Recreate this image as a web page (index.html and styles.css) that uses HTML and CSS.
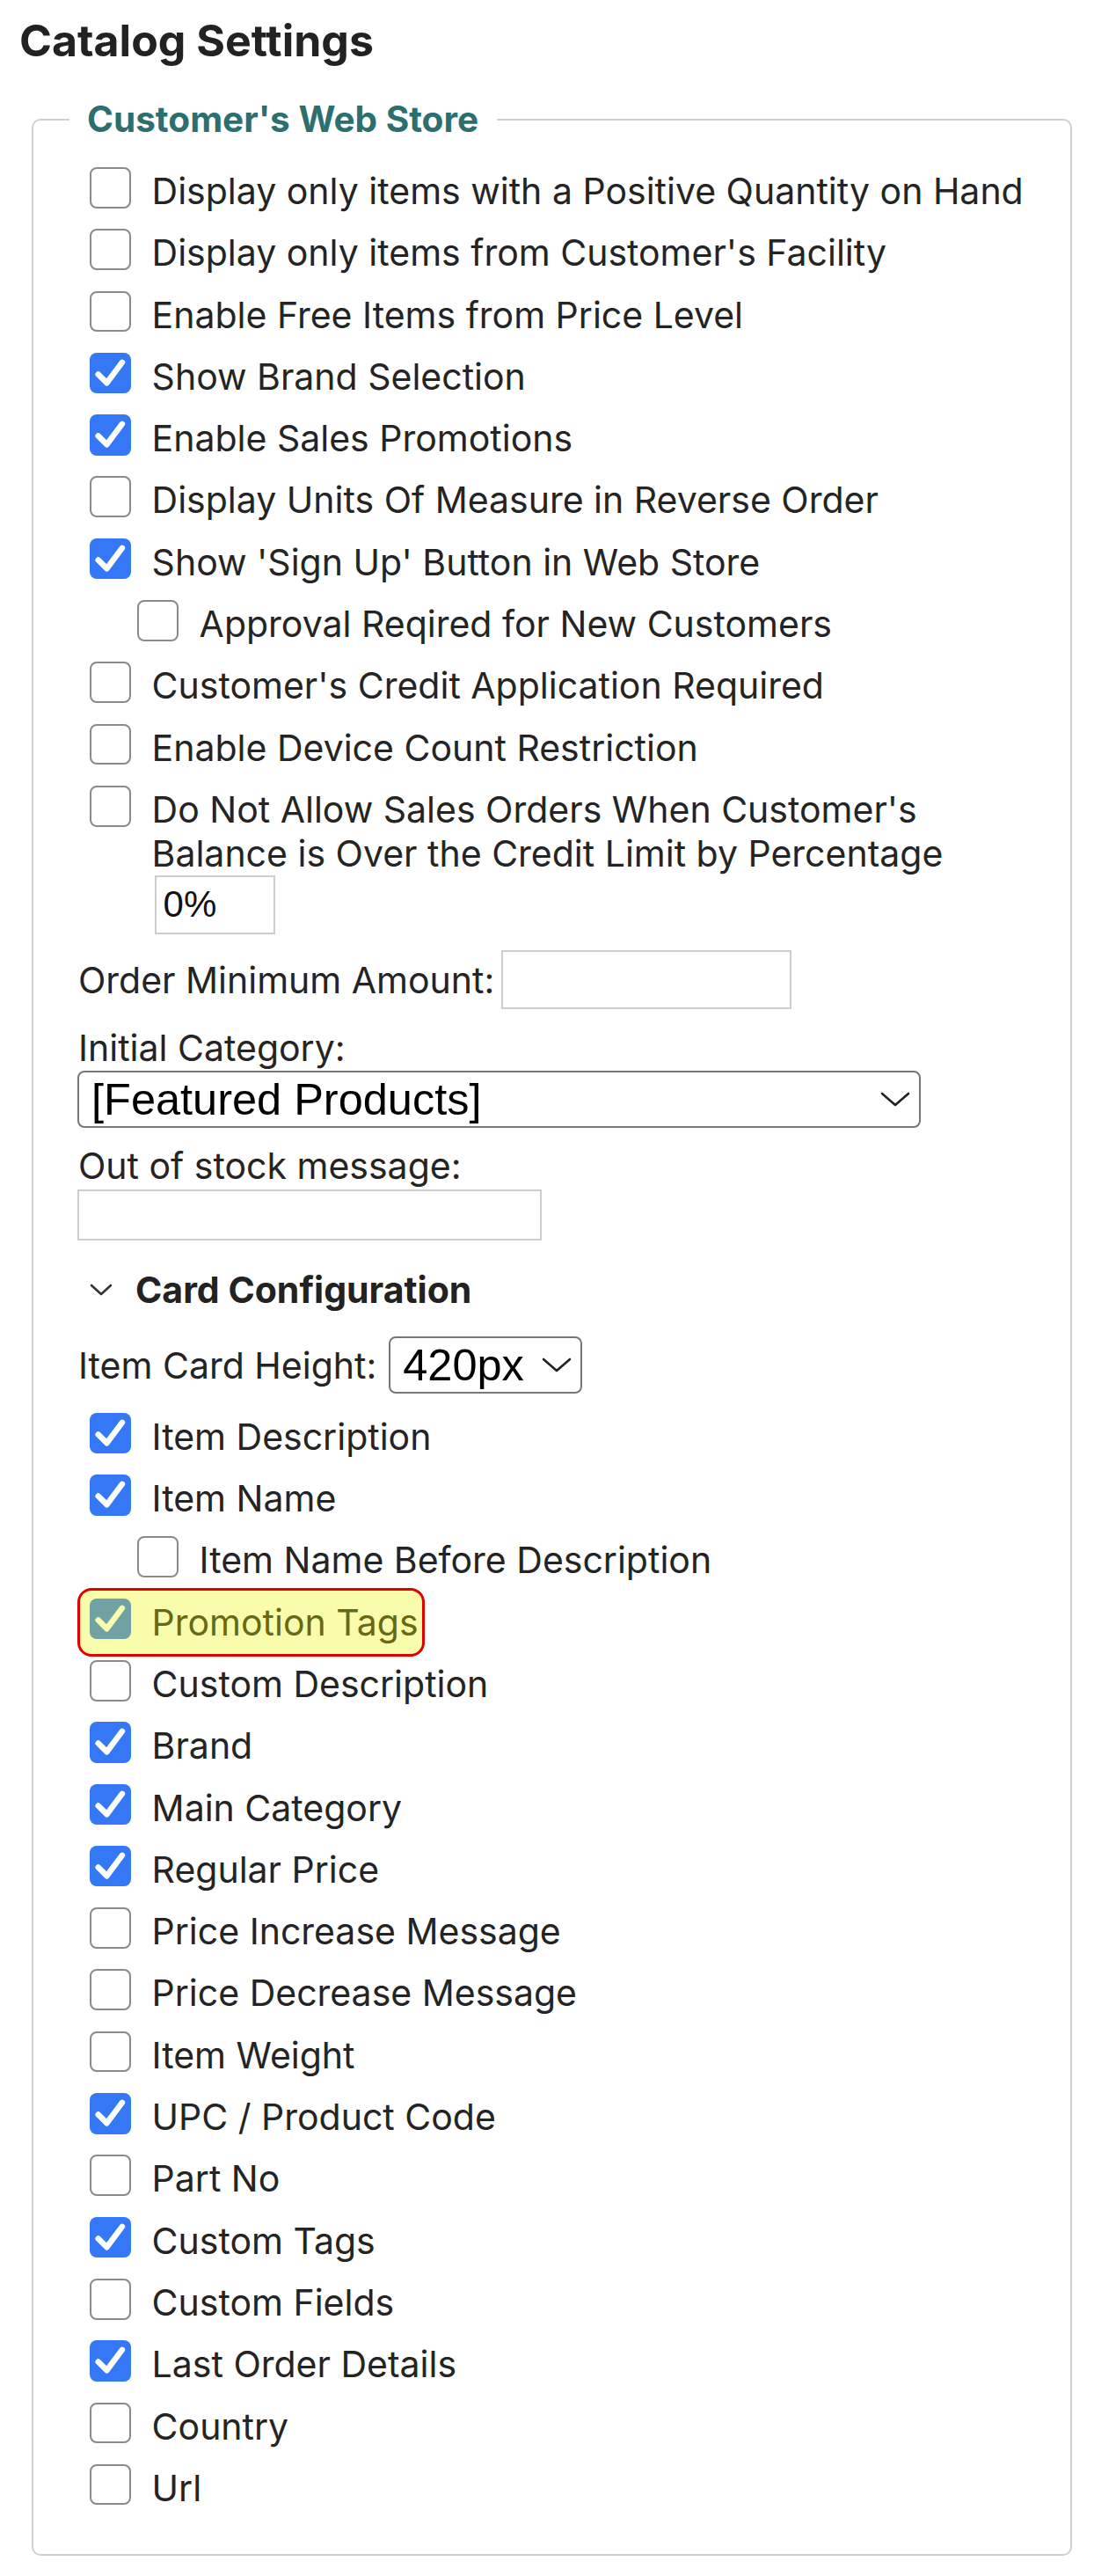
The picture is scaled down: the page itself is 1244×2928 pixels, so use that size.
FILE: index.html
```html
<!DOCTYPE html>
<html lang="en">
<head>
<meta charset="utf-8">
<title>Catalog Settings</title>
<link rel="stylesheet" href="styles.css">
</head>
<body>
<main class="page">
  <h1 class="title">Catalog Settings</h1>
  <fieldset class="group">
    <legend class="group-legend">Customer's Web Store</legend>
    <div class="stack">
      <div class="check"><span class="box" role="checkbox" aria-checked="false"></span><span class="text">Display only items with a Positive Quantity on Hand</span></div>
      <div class="check"><span class="box" role="checkbox" aria-checked="false"></span><span class="text">Display only items from Customer's Facility</span></div>
      <div class="check"><span class="box" role="checkbox" aria-checked="false"></span><span class="text">Enable Free Items from Price Level</span></div>
      <div class="check"><span class="box on" role="checkbox" aria-checked="true"><svg viewBox="0 0 24 24"><path d="M5 12.6 L10 17.6 L19 5.6"/></svg></span><span class="text">Show Brand Selection</span></div>
      <div class="check"><span class="box on" role="checkbox" aria-checked="true"><svg viewBox="0 0 24 24"><path d="M5 12.6 L10 17.6 L19 5.6"/></svg></span><span class="text">Enable Sales Promotions</span></div>
      <div class="check"><span class="box" role="checkbox" aria-checked="false"></span><span class="text">Display Units Of Measure in Reverse Order</span></div>
      <div class="check"><span class="box on" role="checkbox" aria-checked="true"><svg viewBox="0 0 24 24"><path d="M5 12.6 L10 17.6 L19 5.6"/></svg></span><span class="text">Show 'Sign Up' Button in Web Store</span></div>
      <div class="check sub"><span class="box" role="checkbox" aria-checked="false"></span><span class="text">Approval Reqired for New Customers</span></div>
      <div class="check"><span class="box" role="checkbox" aria-checked="false"></span><span class="text">Customer's Credit Application Required</span></div>
      <div class="check"><span class="box" role="checkbox" aria-checked="false"></span><span class="text">Enable Device Count Restriction</span></div>
      <div class="check"><span class="box" role="checkbox" aria-checked="false"></span><span class="text">Do Not Allow Sales Orders When Customer's<br>Balance is Over the Credit Limit by Percentage<input class="pct" type="text" value="0%"></span></div>

      <div class="inline-field"><span class="label">Order Minimum Amount:</span><input class="amount" type="text"></div>

      <div class="block-field"><span class="label">Initial Category:</span>
        <div class="select-wrap wide">
          <select class="select"><option>[Featured Products]</option></select>
          <svg class="chev" viewBox="0 0 34 17"><path d="M2 2 L17 15 L32 2"/></svg>
        </div>
      </div>

      <div class="block-field"><span class="label">Out of stock message:</span><input class="stock" type="text"></div>

      <div class="section-head"><svg class="sec-chev" viewBox="0 0 28 16"><path d="M3 3 L14 13 L25 3"/></svg><span>Card Configuration</span></div>

      <div class="inline-field card-height"><span class="label">Item Card Height:</span>
        <div class="select-wrap narrow">
          <select class="select"><option>420px</option></select>
          <svg class="chev" viewBox="0 0 34 17"><path d="M2 2 L17 15 L32 2"/></svg>
        </div>
      </div>

      <div class="check first-card"><span class="box on" role="checkbox" aria-checked="true"><svg viewBox="0 0 24 24"><path d="M5 12.6 L10 17.6 L19 5.6"/></svg></span><span class="text">Item Description</span></div>
      <div class="check"><span class="box on" role="checkbox" aria-checked="true"><svg viewBox="0 0 24 24"><path d="M5 12.6 L10 17.6 L19 5.6"/></svg></span><span class="text">Item Name</span></div>
      <div class="check sub"><span class="box" role="checkbox" aria-checked="false"></span><span class="text">Item Name Before Description</span></div>
      <div class="check marked"><span class="box on" role="checkbox" aria-checked="true"><svg viewBox="0 0 24 24"><path d="M5 12.6 L10 17.6 L19 5.6"/></svg></span><span class="text">Promotion Tags</span><span class="highlight"></span></div>
      <div class="check"><span class="box" role="checkbox" aria-checked="false"></span><span class="text">Custom Description</span></div>
      <div class="check"><span class="box on" role="checkbox" aria-checked="true"><svg viewBox="0 0 24 24"><path d="M5 12.6 L10 17.6 L19 5.6"/></svg></span><span class="text">Brand</span></div>
      <div class="check"><span class="box on" role="checkbox" aria-checked="true"><svg viewBox="0 0 24 24"><path d="M5 12.6 L10 17.6 L19 5.6"/></svg></span><span class="text">Main Category</span></div>
      <div class="check"><span class="box on" role="checkbox" aria-checked="true"><svg viewBox="0 0 24 24"><path d="M5 12.6 L10 17.6 L19 5.6"/></svg></span><span class="text">Regular Price</span></div>
      <div class="check"><span class="box" role="checkbox" aria-checked="false"></span><span class="text">Price Increase Message</span></div>
      <div class="check"><span class="box" role="checkbox" aria-checked="false"></span><span class="text">Price Decrease Message</span></div>
      <div class="check"><span class="box" role="checkbox" aria-checked="false"></span><span class="text">Item Weight</span></div>
      <div class="check"><span class="box on" role="checkbox" aria-checked="true"><svg viewBox="0 0 24 24"><path d="M5 12.6 L10 17.6 L19 5.6"/></svg></span><span class="text">UPC / Product Code</span></div>
      <div class="check"><span class="box" role="checkbox" aria-checked="false"></span><span class="text">Part No</span></div>
      <div class="check"><span class="box on" role="checkbox" aria-checked="true"><svg viewBox="0 0 24 24"><path d="M5 12.6 L10 17.6 L19 5.6"/></svg></span><span class="text">Custom Tags</span></div>
      <div class="check"><span class="box" role="checkbox" aria-checked="false"></span><span class="text">Custom Fields</span></div>
      <div class="check"><span class="box on" role="checkbox" aria-checked="true"><svg viewBox="0 0 24 24"><path d="M5 12.6 L10 17.6 L19 5.6"/></svg></span><span class="text">Last Order Details</span></div>
      <div class="check"><span class="box" role="checkbox" aria-checked="false"></span><span class="text">Country</span></div>
      <div class="check"><span class="box" role="checkbox" aria-checked="false"></span><span class="text">Url</span></div>
    </div>
  </fieldset>
</main>
</body>
</html>
```

FILE: styles.css
```css
* { box-sizing: border-box; }

html, body {
  margin: 0;
  background: #ffffff;
}

body {
  font-family: Inter, "Noto Sans", sans-serif;
  color: #242424;
}

.page {
  padding: 16px 25px 22px 22px;
}

.title {
  margin: 0;
  font-size: 50px;
  line-height: 60px;
  font-weight: 700;
  color: #222222;
}

.group {
  margin: 37px 0 0 14px;
  padding: 32px 24px 50px 51px;
  border: 2px solid #cfcfcf;
  border-radius: 10px;
  min-width: 0;
}

.group-legend {
  margin-left: -10px;
  padding: 0 21px 0 20px;
  font-size: 40.5px;
  line-height: 45px;
  font-weight: 700;
  color: #2d6f6f;
}

.stack {
  display: flex;
  flex-direction: column;
  gap: 18.3px;
}

.check {
  display: flex;
  align-items: flex-start;
  position: relative;
}

.check.sub {
  padding-left: 54px;
}

.box {
  flex: none;
  width: 46.6px;
  height: 46.6px;
  margin-left: 13px;
  margin-right: 24px;
  border: 2px solid #8a8a8a;
  border-radius: 8px;
  background: #ffffff;
  display: flex;
  align-items: center;
  justify-content: center;
}

.box.on {
  border: none;
  background: #3478f6;
}

.box svg {
  width: 100%;
  height: 100%;
  fill: none;
  stroke: #ffffff;
  stroke-width: 3.4;
  stroke-linecap: round;
  stroke-linejoin: round;
}

.text {
  font-size: 41px;
  line-height: 50px;
  padding-top: 2px;
}

.pct {
  display: block;
  width: 137px;
  height: 67px;
  margin: 0 0 0 3px;
  padding: 0 8px;
  border: 2px solid #cdcdcd;
  border-radius: 0;
  font-family: "Liberation Sans", Arial, sans-serif;
  font-size: 42px;
  color: #111111;
  background: #ffffff;
}

.label {
  font-size: 41px;
  line-height: 50px;
}

.inline-field {
  display: flex;
  align-items: center;
  gap: 8px;
}

.amount {
  width: 330px;
  height: 67px;
  margin: 0;
  border: 2px solid #cdcdcd;
  border-radius: 0;
  background: #ffffff;
}

.block-field {
  display: flex;
  flex-direction: column;
  align-items: flex-start;
}

.stock {
  width: 528px;
  height: 58px;
  margin: 2px 0 0 -1px;
  border: 2px solid #cdcdcd;
  border-radius: 0;
  background: #ffffff;
}

.select-wrap {
  position: relative;
}

.select-wrap.wide {
  width: 959px;
  margin: 1px 0 0 -1px;
}

.select-wrap.narrow {
  width: 220px;
}

.select {
  -webkit-appearance: none;
  appearance: none;
  display: block;
  width: 100%;
  height: 65px;
  margin: 0;
  padding: 0 50px 0 14px;
  border: 2px solid #777777;
  border-radius: 8px;
  background: #ffffff;
  font-family: "Liberation Sans", Arial, sans-serif;
  font-size: 50.5px;
  color: #000000;
}

.chev {
  position: absolute;
  right: 12px;
  top: 24px;
  width: 34px;
  height: 17px;
  fill: none;
  stroke: #222222;
  stroke-width: 2.6;
  stroke-linecap: round;
  stroke-linejoin: round;
  pointer-events: none;
}

.section-head {
  display: flex;
  align-items: center;
  margin-top: 13px;
  font-size: 41px;
  line-height: 50px;
  font-weight: 700;
  color: #222222;
}

.sec-chev {
  width: 28px;
  height: 16px;
  margin-left: 12px;
  margin-right: 25px;
  fill: none;
  stroke: #333333;
  stroke-width: 2.6;
  stroke-linecap: round;
  stroke-linejoin: round;
}

.card-height {
  margin-top: 10px;
  gap: 14px;
}

.first-card {
  margin-top: 3px;
}

.highlight {
  position: absolute;
  top: -12px;
  left: -1px;
  width: 395px;
  height: 78px;
  border: 3px solid #e10000;
  border-radius: 16px;
  background: rgba(235, 245, 0, 0.33);
}
```
